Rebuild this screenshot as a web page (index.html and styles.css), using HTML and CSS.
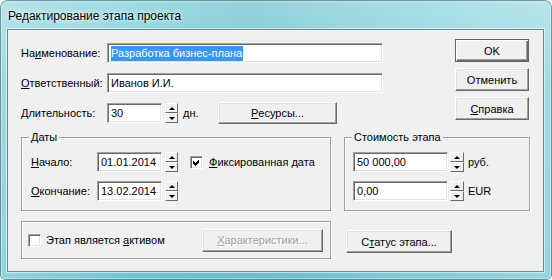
FILE: index.html
```html
<!DOCTYPE html>
<html lang="ru">
<head>
  <meta charset="UTF-8">
  <title>Редактирование этапа проекта</title>
  <link rel="stylesheet" href="styles.css">
</head>
<body>

  <div class="window">
    <div class="titlebar">Редактирование этапа проекта</div>

    <div class="client">
      <!-- верхняя часть: поля и кнопки -->
      <div class="top">
        <div class="fields">
          <div class="row">
            <span class="lbl">На<u>и</u>менование:</span>
            <div class="edit name"><span class="sel">Разработка бизнес-плана</span></div>
          </div>
          <div class="row">
            <span class="lbl"><u>О</u>тветственный:</span>
            <div class="edit name">Иванов И.И.</div>
          </div>
          <div class="row">
            <span class="lbl"><u>Д</u>лительность:</span>
            <div class="edit days">30</div>
            <div class="spin"><span class="up"></span><span class="down"></span></div>
            <span class="unit">дн.</span>
            <div class="btn res"><u>Р</u>есурсы...</div>
          </div>
        </div>

        <div class="buttons">
          <div class="btn default">OK</div>
          <div class="btn">Отменить</div>
          <div class="btn"><u>С</u>правка</div>
        </div>
      </div>

      <!-- группы -->
      <div class="groups">
        <div class="group dates">
          <span class="legend">Даты</span>
          <div class="drow">
            <span class="dlbl"><u>Н</u>ачало:</span>
            <div class="edit date">01.01.2014</div>
            <div class="spin"><span class="up"></span><span class="down"></span></div>
            <div class="check fixed">
              <svg width="11" height="11" viewBox="0 0 11 11"><path d="M2 4 L4 6 L8 2 L8 5 L4 9 L2 7 Z" fill="#000" shape-rendering="crispEdges"/></svg>
            </div>
            <span class="chk-text"><u>Ф</u>иксированная дата</span>
          </div>
          <div class="drow">
            <span class="dlbl"><u>О</u>кончание:</span>
            <div class="edit date">13.02.2014</div>
            <div class="spin"><span class="up"></span><span class="down"></span></div>
          </div>
        </div>

        <div class="group cost">
          <span class="legend">Стоимость этапа</span>
          <div class="drow">
            <div class="edit money">50 000,00</div>
            <div class="spin wide"><span class="up"></span><span class="down"></span></div>
            <span class="cur">руб.</span>
          </div>
          <div class="drow">
            <div class="edit money">0,00</div>
            <div class="spin wide"><span class="up"></span><span class="down"></span></div>
            <span class="cur">EUR</span>
          </div>
        </div>
      </div>

      <!-- нижняя часть -->
      <div class="bottom">
        <div class="group bgroup">
          <div class="check"></div>
          <span class="chk-text">Этап является <u>а</u>ктивом</span>
          <div class="btn disabled chars"><u>Х</u>арактеристики...</div>
        </div>
        <div class="btn status">С<u>т</u>атус этапа...</div>
      </div>
    </div>
  </div>

</body>
</html>
```

FILE: styles.css
```css
* { box-sizing: border-box; }
body {
  margin: 0; background: #fff; color: #000;
  font-family: "Liberation Sans", Arial, sans-serif; font-size: 11px;
}

/* рамка окна */
.window {
  width: 552px; height: 280px;
  padding: 0 8px 8px 7px;
  border-radius: 7px 7px 5px 5px;
  background:
    linear-gradient(90deg, rgba(255,255,255,.25) 0, rgba(255,255,255,0) 25%, rgba(0,0,0,.04) 45%, rgba(255,255,255,.12) 75%, rgba(255,255,255,.28) 100%),
    linear-gradient(180deg, #9edbe3 0, #7fcfd9 30%, #6cc6d2 100%);
  box-shadow: inset 0 0 0 1px rgba(30,80,90,.55), inset 0 0 0 2px rgba(255,255,255,.35);
}
.titlebar {
  height: 29px; padding: 9px 0 0 1px;
  font-size: 12px; line-height: 14px;
  text-shadow: 0 0 6px #fff, 0 0 3px rgba(255,255,255,.8);
}
.client {
  height: 243px; background: #f0f0f0;
  border: 1px solid #6a8a90;
  box-shadow: 0 0 0 1px rgba(255,255,255,.55);
  padding: 9px 14px 0 13px;
}

/* кнопки */
.btn {
  display: flex; align-items: center; justify-content: center;
  height: 23px; background: #f0f0f0; white-space: nowrap;
  border: 1px solid; border-color: #fff #696969 #696969 #fff;
  box-shadow: inset -1px -1px #a0a0a0, inset 1px 1px #e3e3e3;
}
.btn.default {
  border-color: #646464;
  box-shadow: inset 1px 1px #fff, inset -1px -1px #696969, inset -2px -2px #a0a0a0;
}
.btn.disabled { color: #a0a0a0; text-shadow: 1px 1px #fff; }

/* поля ввода */
.edit {
  height: 20px; background: #fff; padding: 0 3px;
  line-height: 18px; white-space: nowrap; overflow: hidden;
  border: 1px solid; border-color: #a0a0a0 #fff #fff #a0a0a0;
  box-shadow: inset 1px 1px #696969, inset -1px -1px #e3e3e3;
}
.sel { background: #3399ff; color: #fff; padding: 1px 1px 2px 0; }

.spin {
  display: flex; flex-direction: column;
  width: 13px; height: 20px; margin-left: 3px;
}
.spin.wide { width: 14px; margin-left: 2px; }
.spin span {
  flex: 1; display: flex; align-items: center; justify-content: center;
  background: #f0f0f0;
  border: 1px solid; border-color: #fff #696969 #696969 #fff;
}
.spin .up::after {
  content: ""; border-left: 3px solid transparent; border-right: 3px solid transparent;
  border-bottom: 3px solid #000;
}
.spin .down::after {
  content: ""; border-left: 3px solid transparent; border-right: 3px solid transparent;
  border-top: 3px solid #000;
}

.check {
  width: 13px; height: 13px; flex: none; background: #fff;
  border: 1px solid; border-color: #a0a0a0 #fff #fff #a0a0a0;
  box-shadow: inset 1px 1px #696969, inset -1px -1px #e3e3e3;
}
.check svg { display: block; }

/* верхняя часть */
.top { display: flex; justify-content: space-between; align-items: flex-start; }
.fields { display: flex; flex-direction: column; gap: 10px; margin-top: 4px; width: 362px; }
.row { display: flex; align-items: center; height: 20px; }
.lbl { width: 86px; }
.name { width: 276px; }
.days { width: 55px; }
.unit { margin-left: 5px; width: 35px; }
.res { width: 119px; height: 22px; }
.buttons { display: flex; flex-direction: column; gap: 6px; width: 74px; }

/* групповые рамки */
.groups { display: flex; gap: 13px; margin-top: 14px; }
.group {
  position: relative; flex: none;
  border: 1px solid #a0a0a0;
  box-shadow: inset 1px 1px #fff, 1px 1px #fff;
}
.legend {
  position: absolute; top: -8px; left: 7px;
  padding: 0 2px; line-height: 14px; background: #f0f0f0;
}
.dates { width: 310px; padding: 14px 0 9px 9px; display: flex; flex-direction: column; gap: 9px; }
.cost { width: 186px; padding: 14px 0 9px 8px; display: flex; flex-direction: column; gap: 9px; }
.drow { display: flex; align-items: center; height: 20px; }
.dlbl { width: 66px; }
.date { width: 65px; }
.fixed { margin-left: 12px; }
.chk-text { margin-left: 6px; }
.money { width: 95px; }
.cur { margin-left: 4px; }

/* нижняя часть */
.bottom { display: flex; align-items: flex-start; margin-top: 10px; }
.bgroup { width: 310px; height: 38px; display: flex; align-items: center; padding: 0 7px 0 6px; }
.bgroup .chk-text { margin-left: 5px; }
.chars { width: 121px; margin-left: auto; }
.status { width: 106px; margin: 9px 0 0 15px; }
```
